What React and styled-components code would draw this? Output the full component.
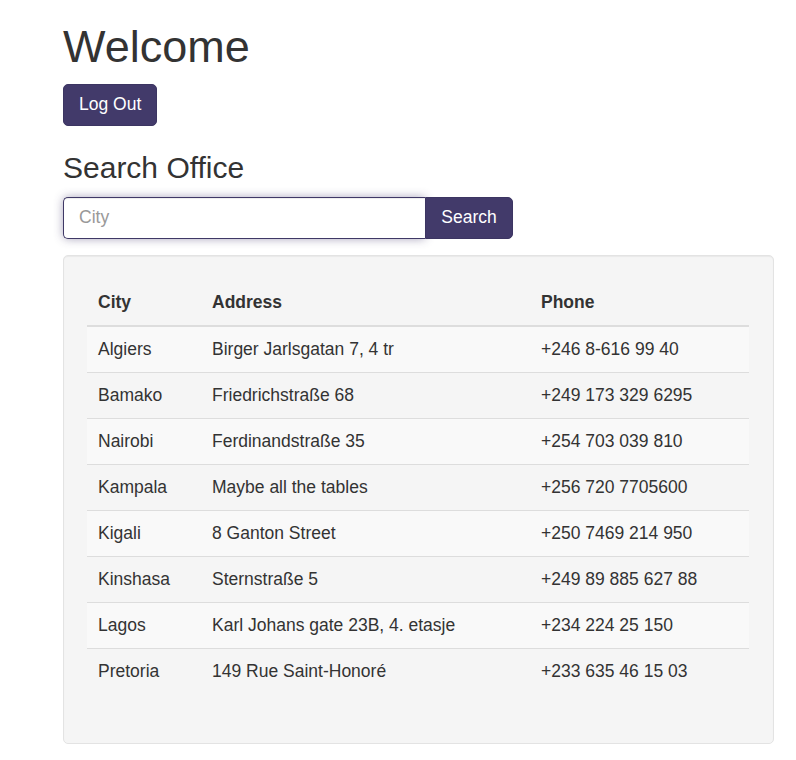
import React from 'react'
import styled, { createGlobalStyle } from 'styled-components'

const offices = [
    { city: 'Algiers', address: 'Birger Jarlsgatan 7, 4 tr', phone: '+246 8-616 99 40' },
    { city: 'Bamako', address: 'Friedrichstraße 68', phone: '+249 173 329 6295' },
    { city: 'Nairobi', address: 'Ferdinandstraße 35', phone: '+254 703 039 810' },
    { city: 'Kampala', address: 'Maybe all the tables', phone: '+256 720 7705600' },
    { city: 'Kigali', address: '8 Ganton Street', phone: '+250 7469 214 950' },
    { city: 'Kinshasa', address: 'Sternstraße 5', phone: '+249 89 885 627 88' },
    { city: 'Lagos', address: 'Karl Johans gate 23B, 4. etasje', phone: '+234 224 25 150' },
    { city: 'Pretoria', address: '149 Rue Saint-Honoré', phone: '+233 635 46 15 03' },
]

const GlobalStyle = createGlobalStyle`
    body {
        margin: 0;
        background: #fff;
        color: #333;
        font-family: 'Liberation Sans', Arial, sans-serif;
        font-size: 17.5px;
        line-height: 1.42857;
    }
    * { box-sizing: border-box; }
`

export default function App() {
    return (
        <>
            <GlobalStyle />
            <Container>
                <Title>Welcome</Title>
                <Button>Log Out</Button>
                <Subtitle>Search Office</Subtitle>
                <InputGroup>
                    <Input placeholder="City" />
                    <Button group>Search</Button>
                </InputGroup>
                <Well>
                    <Table>
                        <colgroup>
                            <col style={{ width: 113 }} />
                            <col style={{ width: 329 }} />
                            <col />
                        </colgroup>
                        <thead>
                            <tr>
                                <Th>City</Th>
                                <Th>Address</Th>
                                <Th>Phone</Th>
                            </tr>
                        </thead>
                        <tbody>
                            {offices.map((o, i) => (
                                <Row key={o.city} striped={i % 2 === 0}>
                                    <Td>{o.city}</Td>
                                    <Td>{o.address}</Td>
                                    <Td>{o.phone}</Td>
                                </Row>
                            ))}
                        </tbody>
                    </Table>
                </Well>
            </Container>
        </>
    )
}

const Container = styled.div`
    width: 711px;
    margin-left: 63px;
`

const Title = styled.h1`
    font-size: 45px;
    font-weight: 500;
    line-height: 1.1;
    margin: 22px 0 12px;
`

const Subtitle = styled.h3`
    font-size: 30px;
    font-weight: 500;
    line-height: 1.1;
    margin: 25px 0 13px;
`

const Button = styled.button`
    display: inline-block;
    height: 42px;
    width: ${p => (p.group ? '88px' : 'auto')};
    padding: 7.5px 15px;
    font-family: inherit;
    font-size: 17.5px;
    line-height: 25px;
    color: #fff;
    background: #423a6a;
    border: 1px solid #3c3562;
    border-radius: ${p => (p.group ? '0 5px 5px 0' : '5px')};
    cursor: pointer;
`

const InputGroup = styled.div`
    display: flex;
    width: 450px;
    margin-bottom: 16px;
`

const Input = styled.input`
    width: 362px;
    height: 42px;
    padding: 7.5px 15px;
    font-family: inherit;
    font-size: 17.5px;
    color: #555;
    border: 1px solid #3f3866;
    border-right: none;
    border-radius: 5px 0 0 5px;
    box-shadow: inset 0 1px 1px rgba(0, 0, 0, 0.075), 0 0 10px rgba(66, 58, 106, 0.45);
    outline: none;
    &::placeholder {
        color: #999;
    }
`

const Well = styled.div`
    background: #f5f5f5;
    border: 1px solid #e3e3e3;
    border-radius: 5px;
    box-shadow: inset 0 1px 1px rgba(0, 0, 0, 0.05);
    padding: 24px 24px 24px 23px;
`

const Table = styled.table`
    width: 100%;
    border-collapse: collapse;
    border-spacing: 0;
    margin-bottom: 25px;
    table-layout: fixed;
`

const Th = styled.th`
    text-align: left;
    font-weight: bold;
    padding: 10px 12px;
    line-height: 25px;
    border-bottom: 2px solid #ddd;
    &:first-child {
        padding-left: 11px;
    }
`

const Row = styled.tr`
    background: ${p => (p.striped ? '#f9f9f9' : 'transparent')};
`

const Td = styled.td`
    padding: 10px 12px;
    line-height: 25px;
    border-top: 1px solid #ddd;
    white-space: nowrap;
    &:first-child {
        padding-left: 11px;
    }
    tr:first-child > & {
        border-top: none;
    }
`
